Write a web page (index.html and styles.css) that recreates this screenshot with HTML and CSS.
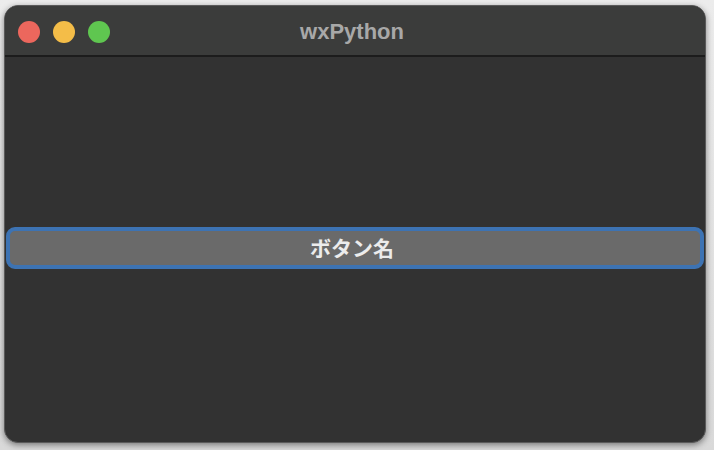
FILE: index.html
```html
<!DOCTYPE html>
<html lang="ja">
<head>
    <meta charset="UTF-8">
    <title>wxPython</title>
    <link rel="stylesheet" href="styles.css">
</head>
<body>

    <div class="window">
        <div class="titlebar">
            <div class="lights">
                <span class="light red"></span>
                <span class="light yellow"></span>
                <span class="light green"></span>
            </div>
            <div class="title">wxPython</div>
        </div>

        <div class="content">
            <button class="wx-button">ボタン名</button>
        </div>
    </div>

</body>
</html>
```

FILE: styles.css
```css
/* General reset */
* {
    margin: 0;
    padding: 0;
    box-sizing: border-box;
}

body {
    width: 714px;
    height: 450px;
    background: linear-gradient(#ececec, #d9d9d9);
    font-family: "Liberation Sans", "Noto Sans CJK JP", sans-serif;
    padding: 5px 8px 7px 4px;
    overflow: hidden;
}

/* Window frame */
.window {
    height: 438px;
    border-radius: 14px;
    background-color: #323232;
    border: 1px solid #5a5a5a;
    box-shadow: 0 2px 6px rgba(0, 0, 0, 0.45);
    display: flex;
    flex-direction: column;
    overflow: hidden;
}

/* Title bar */
.titlebar {
    height: 51px;
    background-color: #3b3c3b;
    border-bottom: 2px solid #1c1c1c;
    display: flex;
    align-items: center;
    position: relative;
}

.lights {
    display: flex;
    gap: 13px;
    padding-left: 13px;
    padding-top: 2px;
}

.light {
    width: 22px;
    height: 22px;
    border-radius: 50%;
}

.red { background-color: #ec675d; }
.yellow { background-color: #f4bd48; }
.green { background-color: #5fc650; }

.title {
    position: absolute;
    left: 0;
    right: 6px;
    top: 14px;
    text-align: center;
    color: #a8a8a8;
    font-weight: bold;
    font-size: 22px;
    line-height: 24px;
    pointer-events: none;
}

/* Content area */
.content {
    flex: 1;
    display: flex;
    align-items: center;
    padding: 0 1px 4px 1px;
}

.wx-button {
    width: 100%;
    height: 42px;
    background-color: #6a6a6a;
    border: 4px solid #3d73b3;
    border-radius: 9px;
    color: #ececec;
    font-family: "Noto Sans CJK JP", sans-serif;
    font-weight: bold;
    font-size: 21px;
    line-height: 1;
    padding-right: 6px;
}
```
